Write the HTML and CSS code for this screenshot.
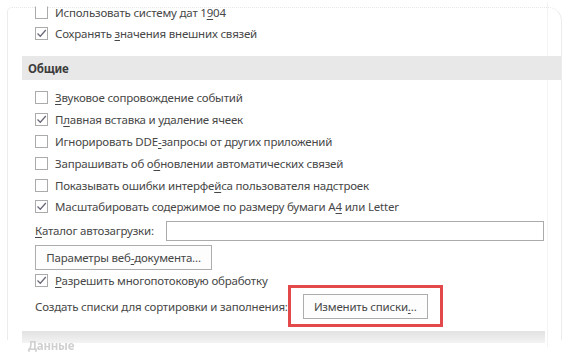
FILE: index.html
```html
<!DOCTYPE html>
<html lang="ru">
<head>
<meta charset="utf-8">
<title>Параметры</title>
<link rel="stylesheet" href="styles.css">
</head>
<body>
<div class="frame">
  <div class="sheet">
    <div class="top-rows">
      <div class="row r21"><span class="cb cb-cut"></span><span>Использовать систему дат 1<u>9</u>04</span></div>
      <div class="row r21"><span class="cb"><svg viewBox="0 0 13 13"><path d="M2.5 6.5 L5.3 9.3 L10.8 3"/></svg></span><span>Сохранять <u>з</u>начения внешних связей</span></div>
    </div>
    <div class="section-head">Общие</div>
    <div class="rows">
      <div class="row"><span class="cb"></span><span><u>З</u>вуковое сопровождение событий</span></div>
      <div class="row"><span class="cb"><svg viewBox="0 0 13 13"><path d="M2.5 6.5 L5.3 9.3 L10.8 3"/></svg></span><span>П<u>л</u>авная вставка и удаление ячеек</span></div>
      <div class="row"><span class="cb"></span><span>Игнорировать DDE<u>-</u>запросы от других приложений</span></div>
      <div class="row"><span class="cb"></span><span>Запрашивать об о<u>б</u>новлении автоматических связей</span></div>
      <div class="row"><span class="cb"></span><span>Показывать ошибки интерфе<u>й</u>са пользователя надстроек</span></div>
      <div class="row"><span class="cb"><svg viewBox="0 0 13 13"><path d="M2.5 6.5 L5.3 9.3 L10.8 3"/></svg></span><span>Масштабировать содержимое по размеру бумаги A<u>4</u> или Letter</span></div>
    </div>
    <div class="field-row">
      <span class="field-label"><u>К</u>аталог автозагрузки:</span>
      <span class="text-input"></span>
    </div>
    <div class="btn-row">
      <span class="btn">Параметры веб<u>-</u>документа...</span>
    </div>
    <div class="row r22"><span class="cb"><svg viewBox="0 0 13 13"><path d="M2.5 6.5 L5.3 9.3 L10.8 3"/></svg></span><span><u>Р</u>азрешить многопотоковую обработку</span></div>
    <div class="lists-row">
      <span class="field-label">Создать списки для сортировки и заполнения:</span>
      <span class="highlight"><span class="btn btn-lists">Изменить списки<u>.</u>..</span></span>
    </div>
    <div class="fade-band"></div>
    <div class="next-head">Данные</div>
  </div>
</div>
</body>
</html>
```
FILE: styles.css
```css
html, body {
  margin: 0;
  padding: 0;
  background: #ffffff;
  overflow: hidden;
  width: 573px;
  height: 353px;
}

body {
  font-family: "Noto Sans", "Open Sans", sans-serif;
  font-size: 11.5px;
  letter-spacing: -0.2px;
  color: #474747;
}

u {
  text-decoration: underline;
  text-underline-offset: 2px;
  text-decoration-thickness: 1px;
}

.frame {
  margin: 7px 11px 0 7px;
  height: 333px;
  box-sizing: border-box;
  border-top: 1px dotted #e6e6e6;
  border-right: 1px solid #ececec;
  border-left: 1px solid #ececec;
  border-radius: 5px 14px 0 0;
  padding-left: 14px;
}

.sheet {
  margin-right: 13px;
  border-right: 1px solid #f3f3f3;
  padding-right: 2px;
  height: 345px;
}

.top-rows {
  margin-top: -6px;
}

.row {
  display: flex;
  align-items: center;
  height: 21.8px;
  padding-left: 13px;
  white-space: nowrap;
}

.row.r21 {
  height: 21px;
}

.row.r22 {
  height: 22px;
}

.cb {
  width: 13px;
  height: 13px;
  box-sizing: border-box;
  border: 1px solid #ababab;
  background: #ffffff;
  margin-right: 7px;
  flex: none;
  position: relative;
}

.cb.cb-cut {
  border-top-color: transparent;
}

.cb svg {
  position: absolute;
  left: -1px;
  top: -1px;
  width: 13px;
  height: 13px;
}

.cb svg path {
  fill: none;
  stroke: #6e6878;
  stroke-width: 1.3;
}

.section-head {
  margin-top: 12px;
  margin-right: -16px;
  height: 24px;
  background: #e8e8e8;
  font-weight: bold;
  color: #3c3c3c;
  padding-left: 6px;
  display: flex;
  align-items: center;
}

.rows {
  margin-top: 7px;
}

.field-row {
  display: flex;
  align-items: center;
  margin-top: 3px;
  padding-left: 13px;
  height: 20px;
}

.field-label {
  white-space: nowrap;
}

.text-input {
  flex: 1;
  height: 20px;
  box-sizing: border-box;
  border: 1px solid #ababab;
  background: #ffffff;
  margin-left: 12px;
  margin-right: 1px;
}

.btn-row {
  margin-top: 4px;
  padding-left: 13px;
  display: flex;
}

.btn {
  display: inline-flex;
  align-items: center;
  justify-content: center;
  height: 25px;
  box-sizing: border-box;
  border: 1px solid #adadad;
  background: #fdfdfd;
  color: #474747;
  white-space: nowrap;
  width: 177px;
}

.lists-row {
  display: flex;
  align-items: center;
  margin-top: 2.5px;
  padding-left: 13px;
  height: 25px;
}

.highlight {
  display: inline-flex;
  border: 3px solid #e3484a;
  padding: 6px 12px 5px 12px;
  margin: -9px -15px -8px 0;
}

.btn-lists {
  width: 125px;
}

.fade-band {
  margin-top: 12px;
  height: 12px;
  background: linear-gradient(#e2e2e2, #f3f3f3);
}

.next-head {
  margin-top: -5px;
  padding-left: 6px;
  font-weight: bold;
  color: #d0d0d0;
  filter: blur(0.4px);
}
```
